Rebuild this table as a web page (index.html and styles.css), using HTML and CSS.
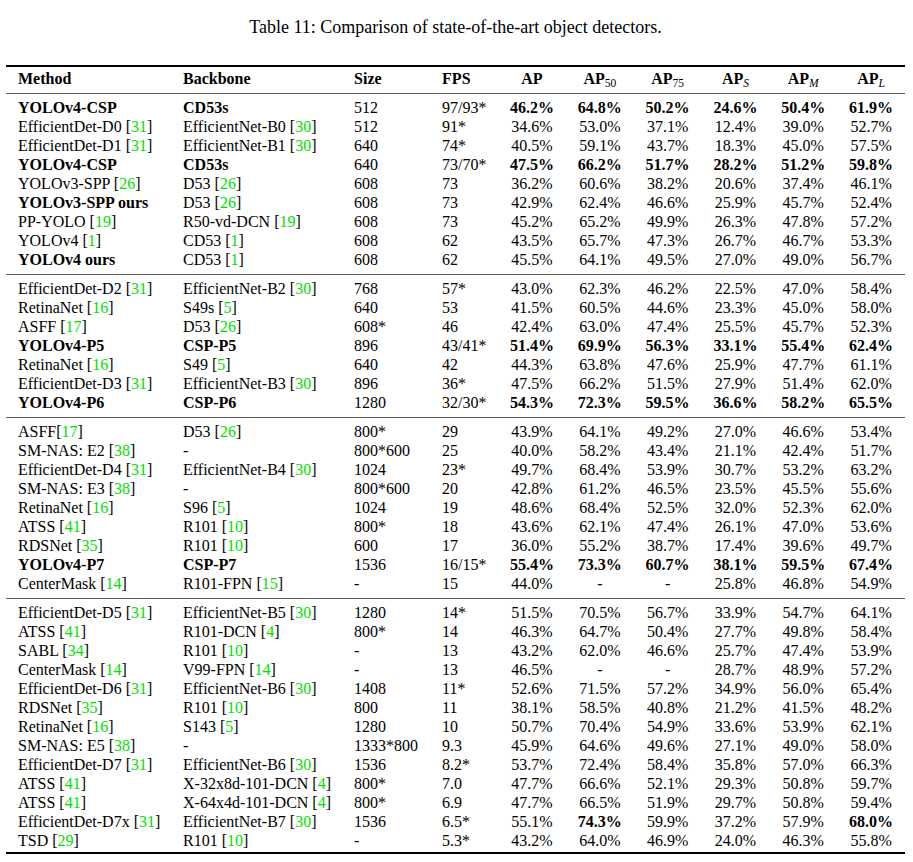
FILE: index.html
```html
<!DOCTYPE html>
<html lang="en">
<head>
<meta charset="utf-8">
<title>Table 11</title>
<link rel="stylesheet" href="styles.css">
</head>
<body>
<div class="page">
<p class="caption">Table 11: Comparison of state-of-the-art object detectors.</p>
<table class="results">
<colgroup>
<col class="c-method"><col class="c-backbone"><col class="c-size"><col class="c-fps">
<col class="c-ap"><col class="c-ap"><col class="c-ap"><col class="c-ap"><col class="c-ap"><col class="c-ap">
</colgroup>
<thead>
<tr>
<th class="l first">Method</th><th class="l">Backbone</th><th class="l">Size</th><th class="l">FPS</th>
<th>AP</th><th>AP<sub>50</sub></th><th>AP<sub>75</sub></th><th>AP<sub class="it">S</sub></th><th>AP<sub class="it">M</sub></th><th>AP<sub class="it">L</sub></th>
</tr>
</thead>
<tbody>
<tr class="b"><td class="first">YOLOv4-CSP</td><td>CD53s</td><td class="n">512</td><td class="n">97/93*</td><td>46.2%</td><td>64.8%</td><td>50.2%</td><td>24.6%</td><td>50.4%</td><td>61.9%</td></tr>
<tr><td class="first">EfficientDet-D0 [<span class="ref">31</span>]</td><td>EfficientNet-B0 [<span class="ref">30</span>]</td><td>512</td><td>91*</td><td>34.6%</td><td>53.0%</td><td>37.1%</td><td>12.4%</td><td>39.0%</td><td>52.7%</td></tr>
<tr><td class="first">EfficientDet-D1 [<span class="ref">31</span>]</td><td>EfficientNet-B1 [<span class="ref">30</span>]</td><td>640</td><td>74*</td><td>40.5%</td><td>59.1%</td><td>43.7%</td><td>18.3%</td><td>45.0%</td><td>57.5%</td></tr>
<tr class="b"><td class="first">YOLOv4-CSP</td><td>CD53s</td><td class="n">640</td><td class="n">73/70*</td><td>47.5%</td><td>66.2%</td><td>51.7%</td><td>28.2%</td><td>51.2%</td><td>59.8%</td></tr>
<tr><td class="first">YOLOv3-SPP [<span class="ref">26</span>]</td><td>D53 [<span class="ref">26</span>]</td><td>608</td><td>73</td><td>36.2%</td><td>60.6%</td><td>38.2%</td><td>20.6%</td><td>37.4%</td><td>46.1%</td></tr>
<tr><td class="first bold">YOLOv3-SPP ours</td><td>D53 [<span class="ref">26</span>]</td><td>608</td><td>73</td><td>42.9%</td><td>62.4%</td><td>46.6%</td><td>25.9%</td><td>45.7%</td><td>52.4%</td></tr>
<tr><td class="first">PP-YOLO [<span class="ref">19</span>]</td><td>R50-vd-DCN [<span class="ref">19</span>]</td><td>608</td><td>73</td><td>45.2%</td><td>65.2%</td><td>49.9%</td><td>26.3%</td><td>47.8%</td><td>57.2%</td></tr>
<tr><td class="first">YOLOv4 [<span class="ref">1</span>]</td><td>CD53 [<span class="ref">1</span>]</td><td>608</td><td>62</td><td>43.5%</td><td>65.7%</td><td>47.3%</td><td>26.7%</td><td>46.7%</td><td>53.3%</td></tr>
<tr><td class="first bold">YOLOv4 ours</td><td>CD53 [<span class="ref">1</span>]</td><td>608</td><td>62</td><td>45.5%</td><td>64.1%</td><td>49.5%</td><td>27.0%</td><td>49.0%</td><td>56.7%</td></tr>
</tbody>
<tbody>
<tr><td class="first">EfficientDet-D2 [<span class="ref">31</span>]</td><td>EfficientNet-B2 [<span class="ref">30</span>]</td><td>768</td><td>57*</td><td>43.0%</td><td>62.3%</td><td>46.2%</td><td>22.5%</td><td>47.0%</td><td>58.4%</td></tr>
<tr><td class="first">RetinaNet [<span class="ref">16</span>]</td><td>S49s [<span class="ref">5</span>]</td><td>640</td><td>53</td><td>41.5%</td><td>60.5%</td><td>44.6%</td><td>23.3%</td><td>45.0%</td><td>58.0%</td></tr>
<tr><td class="first">ASFF [<span class="ref">17</span>]</td><td>D53 [<span class="ref">26</span>]</td><td>608*</td><td>46</td><td>42.4%</td><td>63.0%</td><td>47.4%</td><td>25.5%</td><td>45.7%</td><td>52.3%</td></tr>
<tr class="b"><td class="first">YOLOv4-P5</td><td>CSP-P5</td><td class="n">896</td><td class="n">43/41*</td><td>51.4%</td><td>69.9%</td><td>56.3%</td><td>33.1%</td><td>55.4%</td><td>62.4%</td></tr>
<tr><td class="first">RetinaNet [<span class="ref">16</span>]</td><td>S49 [<span class="ref">5</span>]</td><td>640</td><td>42</td><td>44.3%</td><td>63.8%</td><td>47.6%</td><td>25.9%</td><td>47.7%</td><td>61.1%</td></tr>
<tr><td class="first">EfficientDet-D3 [<span class="ref">31</span>]</td><td>EfficientNet-B3 [<span class="ref">30</span>]</td><td>896</td><td>36*</td><td>47.5%</td><td>66.2%</td><td>51.5%</td><td>27.9%</td><td>51.4%</td><td>62.0%</td></tr>
<tr class="b"><td class="first">YOLOv4-P6</td><td>CSP-P6</td><td class="n">1280</td><td class="n">32/30*</td><td>54.3%</td><td>72.3%</td><td>59.5%</td><td>36.6%</td><td>58.2%</td><td>65.5%</td></tr>
</tbody>
<tbody>
<tr><td class="first">ASFF[<span class="ref">17</span>]</td><td>D53 [<span class="ref">26</span>]</td><td>800*</td><td>29</td><td>43.9%</td><td>64.1%</td><td>49.2%</td><td>27.0%</td><td>46.6%</td><td>53.4%</td></tr>
<tr><td class="first">SM-NAS: E2 [<span class="ref">38</span>]</td><td>-</td><td>800*600</td><td>25</td><td>40.0%</td><td>58.2%</td><td>43.4%</td><td>21.1%</td><td>42.4%</td><td>51.7%</td></tr>
<tr><td class="first">EfficientDet-D4 [<span class="ref">31</span>]</td><td>EfficientNet-B4 [<span class="ref">30</span>]</td><td>1024</td><td>23*</td><td>49.7%</td><td>68.4%</td><td>53.9%</td><td>30.7%</td><td>53.2%</td><td>63.2%</td></tr>
<tr><td class="first">SM-NAS: E3 [<span class="ref">38</span>]</td><td>-</td><td>800*600</td><td>20</td><td>42.8%</td><td>61.2%</td><td>46.5%</td><td>23.5%</td><td>45.5%</td><td>55.6%</td></tr>
<tr><td class="first">RetinaNet [<span class="ref">16</span>]</td><td>S96 [<span class="ref">5</span>]</td><td>1024</td><td>19</td><td>48.6%</td><td>68.4%</td><td>52.5%</td><td>32.0%</td><td>52.3%</td><td>62.0%</td></tr>
<tr><td class="first">ATSS [<span class="ref">41</span>]</td><td>R101 [<span class="ref">10</span>]</td><td>800*</td><td>18</td><td>43.6%</td><td>62.1%</td><td>47.4%</td><td>26.1%</td><td>47.0%</td><td>53.6%</td></tr>
<tr><td class="first">RDSNet [<span class="ref">35</span>]</td><td>R101 [<span class="ref">10</span>]</td><td>600</td><td>17</td><td>36.0%</td><td>55.2%</td><td>38.7%</td><td>17.4%</td><td>39.6%</td><td>49.7%</td></tr>
<tr class="b"><td class="first">YOLOv4-P7</td><td>CSP-P7</td><td class="n">1536</td><td class="n">16/15*</td><td>55.4%</td><td>73.3%</td><td>60.7%</td><td>38.1%</td><td>59.5%</td><td>67.4%</td></tr>
<tr><td class="first">CenterMask [<span class="ref">14</span>]</td><td>R101-FPN [<span class="ref">15</span>]</td><td>-</td><td>15</td><td>44.0%</td><td>-</td><td>-</td><td>25.8%</td><td>46.8%</td><td>54.9%</td></tr>
</tbody>
<tbody class="last">
<tr><td class="first">EfficientDet-D5 [<span class="ref">31</span>]</td><td>EfficientNet-B5 [<span class="ref">30</span>]</td><td>1280</td><td>14*</td><td>51.5%</td><td>70.5%</td><td>56.7%</td><td>33.9%</td><td>54.7%</td><td>64.1%</td></tr>
<tr><td class="first">ATSS [<span class="ref">41</span>]</td><td>R101-DCN [<span class="ref">4</span>]</td><td>800*</td><td>14</td><td>46.3%</td><td>64.7%</td><td>50.4%</td><td>27.7%</td><td>49.8%</td><td>58.4%</td></tr>
<tr><td class="first">SABL [<span class="ref">34</span>]</td><td>R101 [<span class="ref">10</span>]</td><td>-</td><td>13</td><td>43.2%</td><td>62.0%</td><td>46.6%</td><td>25.7%</td><td>47.4%</td><td>53.9%</td></tr>
<tr><td class="first">CenterMask [<span class="ref">14</span>]</td><td>V99-FPN [<span class="ref">14</span>]</td><td>-</td><td>13</td><td>46.5%</td><td>-</td><td>-</td><td>28.7%</td><td>48.9%</td><td>57.2%</td></tr>
<tr><td class="first">EfficientDet-D6 [<span class="ref">31</span>]</td><td>EfficientNet-B6 [<span class="ref">30</span>]</td><td>1408</td><td>11*</td><td>52.6%</td><td>71.5%</td><td>57.2%</td><td>34.9%</td><td>56.0%</td><td>65.4%</td></tr>
<tr><td class="first">RDSNet [<span class="ref">35</span>]</td><td>R101 [<span class="ref">10</span>]</td><td>800</td><td>11</td><td>38.1%</td><td>58.5%</td><td>40.8%</td><td>21.2%</td><td>41.5%</td><td>48.2%</td></tr>
<tr><td class="first">RetinaNet [<span class="ref">16</span>]</td><td>S143 [<span class="ref">5</span>]</td><td>1280</td><td>10</td><td>50.7%</td><td>70.4%</td><td>54.9%</td><td>33.6%</td><td>53.9%</td><td>62.1%</td></tr>
<tr><td class="first">SM-NAS: E5 [<span class="ref">38</span>]</td><td>-</td><td>1333*800</td><td>9.3</td><td>45.9%</td><td>64.6%</td><td>49.6%</td><td>27.1%</td><td>49.0%</td><td>58.0%</td></tr>
<tr><td class="first">EfficientDet-D7 [<span class="ref">31</span>]</td><td>EfficientNet-B6 [<span class="ref">30</span>]</td><td>1536</td><td>8.2*</td><td>53.7%</td><td>72.4%</td><td>58.4%</td><td>35.8%</td><td>57.0%</td><td>66.3%</td></tr>
<tr><td class="first">ATSS [<span class="ref">41</span>]</td><td>X-32x8d-101-DCN [<span class="ref">4</span>]</td><td>800*</td><td>7.0</td><td>47.7%</td><td>66.6%</td><td>52.1%</td><td>29.3%</td><td>50.8%</td><td>59.7%</td></tr>
<tr><td class="first">ATSS [<span class="ref">41</span>]</td><td>X-64x4d-101-DCN [<span class="ref">4</span>]</td><td>800*</td><td>6.9</td><td>47.7%</td><td>66.5%</td><td>51.9%</td><td>29.7%</td><td>50.8%</td><td>59.4%</td></tr>
<tr><td class="first">EfficientDet-D7x [<span class="ref">31</span>]</td><td>EfficientNet-B7 [<span class="ref">30</span>]</td><td>1536</td><td>6.5*</td><td>55.1%</td><td class="bold">74.3%</td><td>59.9%</td><td>37.2%</td><td>57.9%</td><td class="bold">68.0%</td></tr>
<tr><td class="first">TSD [<span class="ref">29</span>]</td><td>R101 [<span class="ref">10</span>]</td><td>-</td><td>5.3*</td><td>43.2%</td><td>64.0%</td><td>46.9%</td><td>24.0%</td><td>46.3%</td><td>55.8%</td></tr>
</tbody>
</table>
</div>
</body>
</html>
```

FILE: styles.css
```css
html, body {
  margin: 0;
  padding: 0;
  background: #ffffff;
}

.page {
  padding: 17px 0 0 6px;
  font-family: "Liberation Serif", "Times New Roman", serif;
  font-size: 16px;
  color: #000000;
}

.caption {
  margin: 0;
  width: 899px;
  text-align: center;
  font-size: 18px;
  line-height: 20px;
}

.results {
  margin-top: 28px;
  width: 899px;
  table-layout: fixed;
  border-collapse: separate;
  border-spacing: 0;
  line-height: 19px;
}

.c-method { width: 177px; }
.c-backbone { width: 171px; }
.c-size { width: 88px; }
.c-fps { width: 56px; }
.c-ap { width: 67.8px; }

.results th,
.results td {
  padding: 0;
  white-space: nowrap;
  text-align: center;
  vertical-align: middle;
}

.results td:nth-child(-n+4),
.results th.l {
  text-align: left;
}

.results .first {
  padding-left: 12px;
}

.results thead th {
  font-weight: bold;
  border-top: 2px solid #000000;
  border-bottom: 1px solid #5a5a5a;
  padding-top: 2px;
  padding-bottom: 5px;
}

.results thead th.first {
  padding-left: 12px;
}

.results sub {
  font-weight: normal;
  font-size: 11.5px;
  line-height: 0;
  vertical-align: -3px;
}

.results sub.it {
  font-style: italic;
}

.results tbody tr:first-child td {
  padding-top: 4px;
}

.results tbody tr:last-child td {
  padding-bottom: 5px;
}

.results tbody + tbody tr:first-child td {
  border-top: 1px solid #5a5a5a;
}

.results tbody.last tr:last-child td {
  padding-bottom: 2px;
  border-bottom: 2px solid #000000;
}

.results tr.b td {
  font-weight: bold;
}

.results tr.b td.n {
  font-weight: normal;
}

.results td.bold {
  font-weight: bold;
}

.ref {
  color: #00e000;
}
```
